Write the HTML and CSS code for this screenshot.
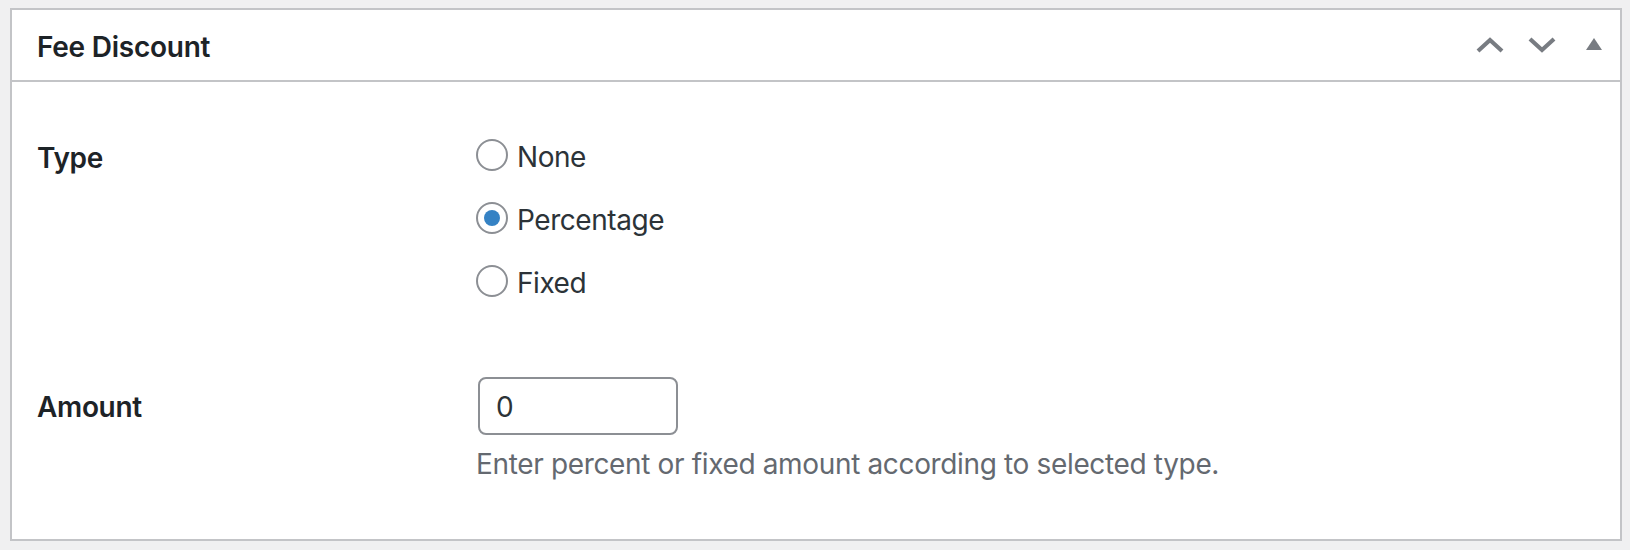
FILE: index.html
```html
<!DOCTYPE html>
<html lang="en">
<head>
<meta charset="utf-8">
<title>Fee Discount</title>
<link rel="stylesheet" href="styles.css">
</head>
<body>
<div class="postbox">
  <div class="postbox-header">
    <h2 class="hndle">Fee Discount</h2>
    <div class="handle-actions">
      <button class="handle-btn" aria-label="Move up">
        <svg width="28" height="16" viewBox="0 0 28 16"><polyline points="2,14 14,3 26,14" fill="none" stroke="#787c82" stroke-width="4.2"/></svg>
      </button>
      <button class="handle-btn" aria-label="Move down">
        <svg width="28" height="16" viewBox="0 0 28 16"><polyline points="2,2 14,13 26,2" fill="none" stroke="#787c82" stroke-width="4.2"/></svg>
      </button>
      <button class="handle-btn toggle" aria-label="Toggle panel">
        <svg width="16" height="12" viewBox="0 0 16 12"><polygon points="8,0 16,12 0,12" fill="#787c82"/></svg>
      </button>
    </div>
  </div>
  <div class="inside">
    <div class="form-row row-type">
      <div class="row-label">Type</div>
      <div class="row-field radios">
        <label class="radio-opt"><span class="radio"></span><span class="radio-text">None</span></label>
        <label class="radio-opt"><span class="radio checked"></span><span class="radio-text">Percentage</span></label>
        <label class="radio-opt"><span class="radio"></span><span class="radio-text">Fixed</span></label>
      </div>
    </div>
    <div class="form-row row-amount">
      <div class="row-label amount-label">Amount</div>
      <div class="row-field">
        <div class="text-input">0</div>
        <p class="description">Enter percent or fixed amount according to selected type.</p>
      </div>
    </div>
  </div>
</div>
</body>
</html>
```
FILE: styles.css
```css
* { box-sizing: border-box; }
html, body { margin: 0; }
body {
  padding: 8px 8px 8px 10px;
  background: #f0f0f1;
  font-family: Inter, "Noto Sans", "Liberation Sans", sans-serif;
}
.postbox {
  height: 533px;
  background: #fff;
  border: 2px solid #c3c4c7;
}
.postbox-header {
  height: 72px;
  border-bottom: 2px solid #c3c4c7;
  display: flex;
  align-items: center;
  justify-content: space-between;
}
.hndle {
  margin: 0;
  padding: 3px 0 0 25px;
  font-size: 28px;
  font-weight: 600;
  color: #1d2327;
  line-height: 34px;
  letter-spacing: -0.25px;
}
.handle-actions {
  display: flex;
  height: 70px;
}
.handle-btn {
  width: 52px;
  height: 70px;
  border: 0;
  background: none;
  padding: 0;
  display: flex;
  align-items: center;
  justify-content: center;
}
.handle-btn svg { display: block; }
.handle-btn.toggle svg { margin-top: -2px; }
.inside {
  padding: 57px 25px 0 25px;
}
.form-row {
  display: grid;
  grid-template-columns: 439px 1fr;
}
.row-label {
  font-size: 28px;
  font-weight: 600;
  color: #1d2327;
  line-height: 32px;
  padding-top: 3px;
  letter-spacing: -0.35px;
}
.radios {
  display: flex;
  flex-direction: column;
  gap: 31px;
}
.radio-opt {
  display: flex;
  align-items: center;
  height: 32px;
  gap: 9px;
}
.radio {
  width: 32px;
  height: 32px;
  border: 2px solid #8c8f94;
  border-radius: 50%;
  display: flex;
  align-items: center;
  justify-content: center;
  flex: none;
}
.radio.checked::after {
  content: "";
  width: 16px;
  height: 16px;
  border-radius: 50%;
  background: #3582c4;
}
.radio-text {
  font-size: 28px;
  color: #2c3338;
  line-height: 32px;
  padding-top: 4px;
  letter-spacing: -0.45px;
}
.row-amount {
  margin-top: 80px;
}
.amount-label {
  line-height: 58px;
  padding-top: 1px;
}
.text-input {
  width: 200px;
  height: 58px;
  margin-left: 2px;
  border: 2px solid #8c8f94;
  border-radius: 8px;
  padding: 1px 16px 0;
  font-size: 28px;
  line-height: 54px;
  color: #2c3338;
}
.description {
  margin: 8px 0 0 0;
  font-size: 28px;
  line-height: 42px;
  color: #646970;
  letter-spacing: -0.35px;
}
```
